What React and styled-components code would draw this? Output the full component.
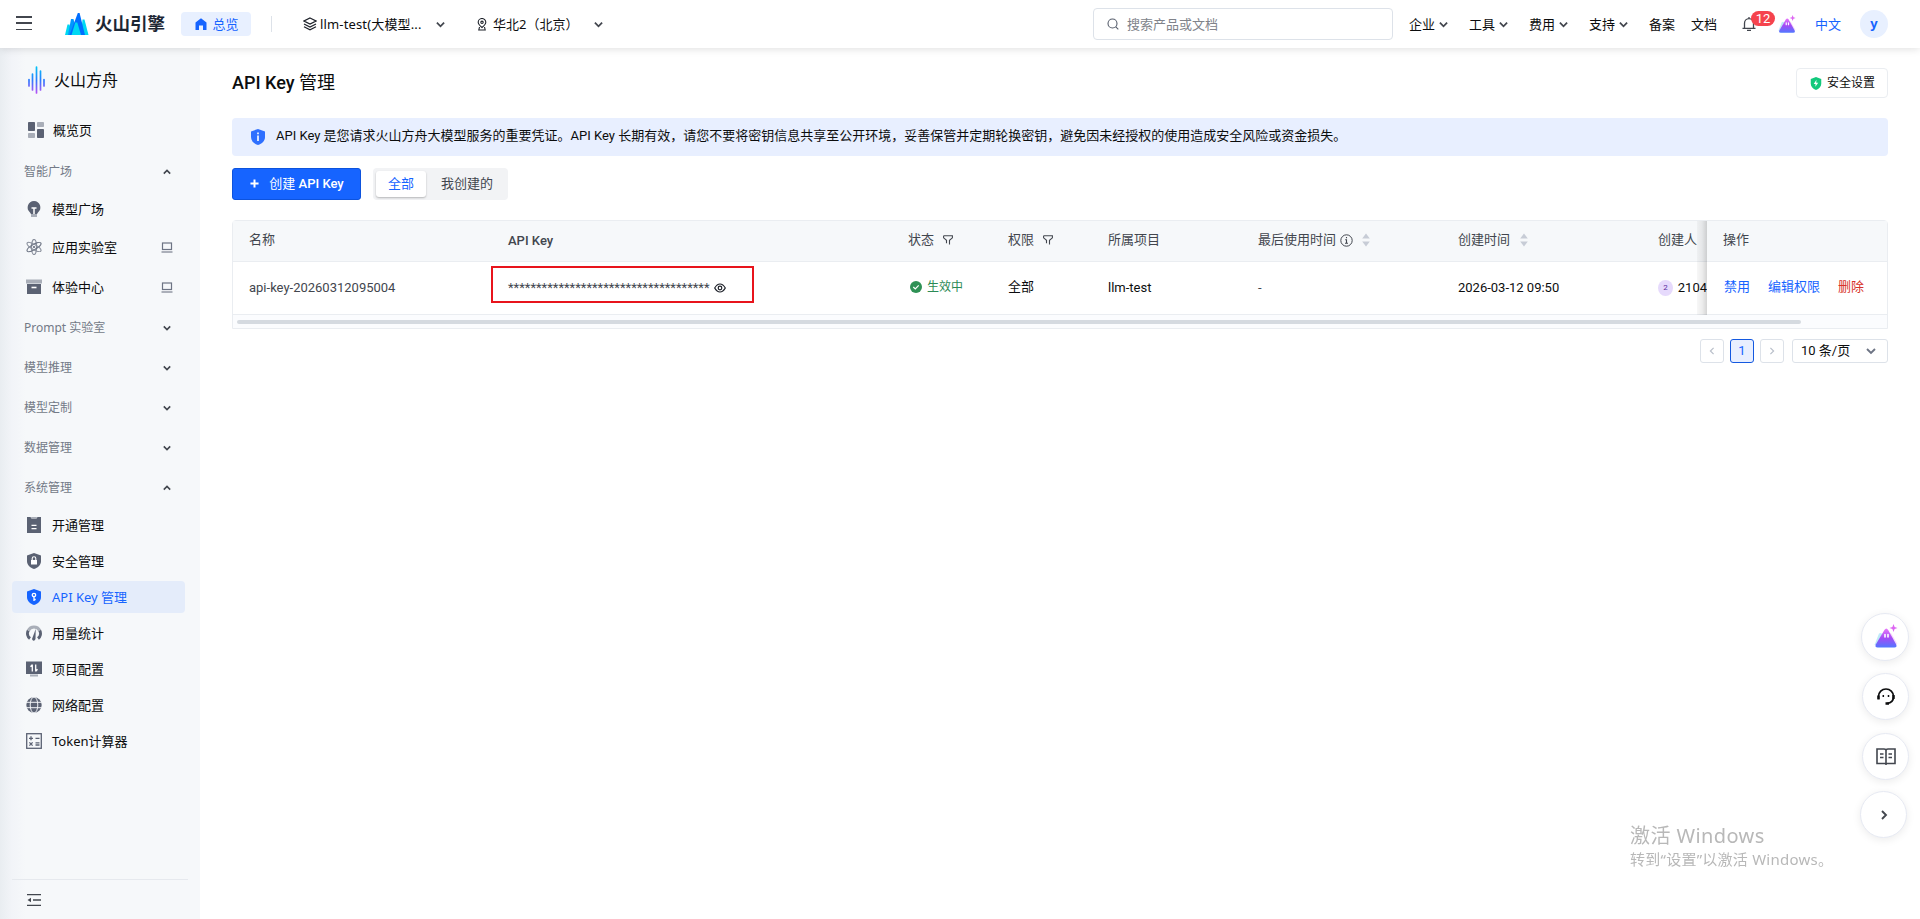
import styled, { createGlobalStyle } from 'styled-components'

const roboto = `Roboto, 'Noto Sans CJK SC', sans-serif`
const sans = `'Noto Sans', 'Noto Sans CJK SC', sans-serif`

const GlobalStyle = createGlobalStyle`
    * {
        box-sizing: border-box;
    }

    body {
        margin: 0;
        overflow: hidden;
        background: #fff;
        color: #0c0d0e;
        font-family: ${roboto};
        font-size: 13px;
        line-height: 20px;
    }
`

const Chevron = ({ size = 8, up, right, left, color = '#42464e', width = 1.6 }) => {
    const turn = up ? 180 : right ? -90 : left ? 90 : 0
    return (
        <svg width={size} height={size} viewBox="0 0 8 8" fill="none" stroke={color} strokeWidth={width}>
            <path d="M0.8 2.4 4 5.6 7.2 2.4" transform={`rotate(${turn} 4 4)`} />
        </svg>
    )
}

const Shield = ({ w = 16, h = 16, color = '#5b6273', children }) => (
    <svg width={w} height={h} viewBox="0 0 16 16" preserveAspectRatio="none">
        <path d="M8 0 15 2.4V8c0 4-3 6.8-7 8C4 14.8 1 12 1 8V2.4Z" fill={color} />
        {children}
    </svg>
)

const AiMountain = ({ size, id }) => (
    <svg width={size} height={size} viewBox="0 0 24 24">
        <defs>
            <linearGradient id={id} x1="0" y1="0" x2="0" y2="1">
                <stop offset="0" stopColor="#e879f9" />
                <stop offset="0.5" stopColor="#a44bf5" />
                <stop offset="1" stopColor="#5277ff" />
            </linearGradient>
        </defs>
        <path d="M5 9.5 0.5 21h7L9 10.5Q7 8 5 9.5Z" fill="#bfeaf8" />
        <path d="M15 9q2-1 3 1.5L23.5 20h-5Z" fill="#f6dcfb" />
        <path d="M10.400 6q1.900-3 3.800 0l8 14.500q1.200 3-1.800 3H3.600q-3 0-1.800-3Z" fill={`url(#${id})`} />
        <path d="M11 10.5v2.500M14 10.500v2.500" stroke="#fff" strokeWidth="1.6" strokeLinecap="round" />
        <path d="m19.500 0 1.100 2.900L23.500 4l-2.900 1.100L19.500 8l-1.100-2.900L15.500 4l2.900-1.100Z" fill="#dd66f2" />
    </svg>
)

const icons = {
    overview: (
        <>
            <rect width="7" height="9" rx="0.8" fill="#5b6273" />
            <rect x="9" y="7" width="7" height="9" rx="0.8" fill="#5b6273" />
            <rect x="9" width="7" height="5" rx="0.8" fill="#a9aeb8" />
            <rect y="11" width="7" height="5" rx="0.8" fill="#a9aeb8" />
        </>
    ),
    bulb: (
        <>
            <path d="M8 0a6.500 6.500 0 0 0-4 11.500l1 1.500h6l1-1.500A6.500 6.500 0 0 0 8 0" fill="#5b6273" />
            <path d="M5 13h6v3H5z" fill="#a9aeb8" />
            <path d="M5.500 7h5M8 7v6" stroke="#fff" strokeWidth="1.500" />
        </>
    ),
    atom: (
        <g fill="none" strokeWidth="1.200">
            <ellipse cx="8" cy="8" rx="2.500" ry="7.600" stroke="#8b919e" />
            <ellipse cx="8" cy="8" rx="2.500" ry="7.900" stroke="#6d7484" transform="rotate(60 8 8)" />
            <ellipse cx="8" cy="8" rx="2.500" ry="7.900" stroke="#8b919e" transform="rotate(-60 8 8)" />
            <circle cx="8" cy="8" r="1" fill="#5b6273" />
        </g>
    ),
    box: (
        <>
            <path d="M0 0.500h16v4H0z" fill="#a9aeb8" />
            <path d="M1 5h14v10H1z" fill="#5b6273" />
            <path d="M5.500 8.500h5" stroke="#fff" strokeWidth="1.600" />
        </>
    ),
    clipboard: (
        <>
            <path d="M1 0h3.500l1 1.500h5l1-1.500H15v16H1z" fill="#5b6273" />
            <path d="M5 0h6l-0.500 1.500h-5z" fill="#a9aeb8" />
            <path d="M5.500 8.300h5M5.500 11.700h5" stroke="#fff" strokeWidth="1.300" />
        </>
    ),
    gauge: (
        <>
            <path d="M4 13.500A6.300 6.300 0 0 1 2.300 5.500" fill="none" stroke="#5b6273" strokeWidth="3" />
            <path d="M2.300 5.500A6.300 6.300 0 0 1 13.700 5.500" fill="none" stroke="#a9aeb8" strokeWidth="3" />
            <path d="M13.700 5.500A6.300 6.300 0 0 1 12 13.500" fill="none" stroke="#5b6273" strokeWidth="3" />
            <path d="m9.700 4-0.200 10q-0.500 2-2.200 1.800Q5.700 15 6.200 13.500Z" fill="#5b6273" />
        </>
    ),
    monitor: (
        <>
            <path d="M0 0.500h16v12.500H0z" fill="#5b6273" />
            <path d="M4 13.500h8v2H4z" fill="#a9aeb8" />
            <path d="M6.300 3.500v7M4.500 5.700 6.300 3.700M9.700 3.500v7M11.500 8.300l-1.800 2" fill="none" stroke="#fff" strokeWidth="1.300" />
        </>
    ),
    globe: (
        <>
            <circle cx="8" cy="8" r="7.700" fill="#5b6273" />
            <g stroke="#f2f4f7" fill="none">
                <path d="M0 5.300h16M0 10.700h16" />
                <ellipse cx="8" cy="8" rx="3.800" ry="8" />
            </g>
        </>
    ),
    calc: (
        <g fill="none" stroke="#5b6273" strokeWidth="1.300">
            <rect x="0.700" y="0.700" width="14.600" height="14.600" />
            <path d="M3 5.300h4M5 3.300v4M9.500 5.300h4M9.500 9.800h4M9.500 12h4M3.400 9.400l3.200 3.200M6.600 9.400l-3.200 3.200" />
        </g>
    ),
}

const NavIcon = ({ name }) => {
    if (name === 'lock') {
        return (
            <Shield>
                <rect x="5" y="7" width="6" height="4.500" fill="#fff" />
                <path d="M6.200 7V5.600a1.800 1.800 0 0 1 3.600 0V7" fill="none" stroke="#fff" strokeWidth="1.100" />
            </Shield>
        )
    }
    if (name === 'key') {
        return (
            <Shield color="#1664ff">
                <circle cx="8" cy="6" r="1.700" fill="none" stroke="#fff" strokeWidth="1.300" />
                <path d="M8 7.500v4.500M8 10.500h1.700" stroke="#fff" strokeWidth="1.300" />
            </Shield>
        )
    }
    return (
        <svg width="16" height="16" viewBox="0 0 16 16">
            {icons[name]}
        </svg>
    )
}

const Filter = () => (
    <svg width="10" height="10" viewBox="0 0 10 10" fill="none" stroke="#42464e" strokeWidth="1.100">
        <path d="M0.600 0.800h8.800v2L6.500 5.300v4.200M3.500 8.300v-3L0.600 2.800v-2" />
    </svg>
)

const Sorter = () => (
    <svg width="8" height="14" viewBox="0 0 8 14" fill="#c7ccd6">
        <path d="M4 0.500 7.800 5.500H0.200ZM4 13.500 7.800 8.500H0.200Z" />
    </svg>
)

const Laptop = () => (
    <svg width="12" height="11" viewBox="0 0 12 11" fill="none" stroke="#6d7484">
        <rect x="1.500" y="1" width="9" height="6.500" strokeWidth="1.200" />
        <path d="M0.500 10h11" strokeWidth="1.100" />
    </svg>
)

const menus = ['企业', '工具', '费用', '支持']

const plaza = [
    { text: '模型广场', icon: 'bulb', height: 36 },
    { text: '应用实验室', icon: 'atom', height: 40, laptop: true },
    { text: '体验中心', icon: 'box', height: 40, laptop: true },
]

const system = [
    { text: '开通管理', icon: 'clipboard' },
    { text: '安全管理', icon: 'lock' },
    { text: 'API Key 管理', icon: 'key', active: true },
    { text: '用量统计', icon: 'gauge' },
    { text: '项目配置', icon: 'monitor' },
    { text: '网络配置', icon: 'globe' },
    { text: 'Token计算器', icon: 'calc' },
]

function TopBar() {
    return (
        <Header>
            <Burger>
                <i />
                <i />
                <i />
            </Burger>
            <Logo>
                <svg width="24" height="22" viewBox="0 0 24 22">
                    <path d="M0 22 2.500 11.500h2L7 22Z" fill="#00d8f2" />
                    <path d="M16 22 17.500 6.500h2L23.500 22Z" fill="#00d8f2" />
                    <path d="M3 22 6 6h2.500L12 22Z" fill="#0098ff" />
                    <path d="M4.500 22 12.800 0h1.800L20 22Z" fill="#006eff" />
                    <path d="M6.500 22 10.300 9.500h2L16 22Z" fill="#00d8f2" />
                </svg>
                <span>火山引擎</span>
            </Logo>
            <HomeButton>
                <svg width="12" height="12" viewBox="0 0 12 12">
                    <path d="M6 0.300 11.500 4.500V12H8V7.500H4V12H0.500V4.500Z" fill="#1664ff" />
                </svg>
                总览
            </HomeButton>
            <Divider />
            <Picker $width={174}>
                <svg width="14" height="14" viewBox="0 0 14 14" fill="none" stroke="#1d2129" strokeWidth="1.200">
                    <path d="M7 1 13 4 7 7 1 4ZM1 7l6 3 6-3M1 9.800l6 3 6-3" />
                </svg>
                <PickerText>llm-test(大模型...</PickerText>
                <Chevron size={9} />
            </Picker>
            <Picker $width={127}>
                <svg width="10" height="13" viewBox="0 0 10 13" fill="none" stroke="#1d2129" strokeWidth="1.100">
                    <path d="M5 9.500C2.500 7.500 1.200 6 1.200 4.300a3.800 3.800 0 0 1 7.600 0C8.800 6 7.500 7.500 5 9.500ZM2.500 9 1.800 12h6.400L7.500 9" />
                    <circle cx="5" cy="4.300" r="1.200" />
                </svg>
                <PickerText $gap={6}>华北2（北京）</PickerText>
                <Chevron size={9} />
            </Picker>
            <Search>
                <svg width="12" height="12" viewBox="0 0 12 12" fill="none" stroke="#565d6b" strokeWidth="1.100">
                    <circle cx="5.500" cy="5.500" r="4.500" />
                    <path d="m8.800 8.800 2.500 2.500" />
                </svg>
                搜索产品或文档
            </Search>
            <Menus>
                {menus.map((text) => (
                    <MenuItem key={text} $width={60}>
                        {text}
                        <Chevron size={9} />
                    </MenuItem>
                ))}
                <MenuItem $width={42}>备案</MenuItem>
                <MenuItem $width={51}>文档</MenuItem>
            </Menus>
            <Bell>
                <svg width="14" height="14" viewBox="0 0 14 14" fill="none" stroke="#42464e" strokeWidth="1.300">
                    <path d="M0.500 11.300h13M2.500 11V6.200a4.500 4.500 0 0 1 9 0V11M7 0v1.700M5 13.300h4" />
                </svg>
                <Badge>12</Badge>
            </Bell>
            <AiMountain size={18} id="mountainTop" />
            <Language>中文</Language>
            <Avatar>y</Avatar>
        </Header>
    )
}

function SideBar() {
    return (
        <Side>
            <Product>
                <svg width="17" height="28" viewBox="0 0 17 28" strokeWidth="1.700" strokeLinecap="round">
                    <defs>
                        <linearGradient id="ark" gradientUnits="userSpaceOnUse" x1="0" y1="0" x2="0" y2="28">
                            <stop offset="0" stopColor="#00c8f5" />
                            <stop offset="0.500" stopColor="#2b7cff" />
                            <stop offset="1" stopColor="#c050f5" />
                        </linearGradient>
                    </defs>
                    <g stroke="url(#ark)">
                        <path d="M1 13.500 1.010 20M4.500 8 4.510 24M8.500 1 8.510 27M12.500 5 12.510 24M16 13.500 16.010 20" />
                    </g>
                </svg>
                火山方舟
            </Product>
            <NavItem $height={36} $wide>
                <NavIcon name="overview" />
                概览页
            </NavItem>
            <Group $height={43} $top={4}>
                智能广场
                <Chevron up />
            </Group>
            <PlazaList>
                {plaza.map((item) => (
                    <NavItem key={item.text} $height={item.height}>
                        <NavIcon name={item.icon} />
                        {item.text}
                        {item.laptop && (
                            <NavTail>
                                <Laptop />
                            </NavTail>
                        )}
                    </NavItem>
                ))}
            </PlazaList>
            {['Prompt 实验室', '模型推理', '模型定制', '数据管理'].map((text) => (
                <Group key={text}>
                    {text}
                    <Chevron />
                </Group>
            ))}
            <Group>
                系统管理
                <Chevron up />
            </Group>
            <SystemList>
                {system.map((item) => (
                    <NavItem key={item.text} $height={32} $active={item.active}>
                        <NavIcon name={item.icon} />
                        {item.text}
                    </NavItem>
                ))}
            </SystemList>
            <Collapse>
                <svg width="14" height="12" viewBox="0 0 14 12" stroke="#42464e" strokeWidth="1.300">
                    <path d="M0 0.700h14M6 6h8M0 11.300h14" />
                    <path d="M0.500 6 4 3.800v4.400Z" fill="#42464e" stroke="none" />
                </svg>
            </Collapse>
        </Side>
    )
}

function KeyTable() {
    return (
        <Table>
            <Row $head>
                <Cell $width={259} $lift>
                    名称
                </Cell>
                <Cell $width={400}>
                    <b>API Key</b>
                </Cell>
                <Cell $width={100} $gap={9} $lift>
                    状态 <Filter />
                </Cell>
                <Cell $width={100} $gap={9} $lift>
                    权限 <Filter />
                </Cell>
                <Cell $width={150} $lift>
                    所属项目
                </Cell>
                <Cell $width={200} $lift>
                    最后使用时间
                    <Info width="13" height="13" viewBox="0 0 13 13" fill="none" stroke="#42464e">
                        <circle cx="6.500" cy="6.500" r="5.700" />
                        <path d="M6.500 3v1.300M5.200 5.800h1.300V9M5 9.300h3" strokeWidth="1.100" />
                    </Info>
                    <Sorter />
                </Cell>
                <Cell $width={200} $gap={10} $lift>
                    创建时间 <Sorter />
                </Cell>
                <Cell $width={65} $lift>
                    创建人
                </Cell>
                <Fixed $head>操作</Fixed>
            </Row>
            <Row>
                <Cell $width={259} $muted>
                    api-key-20260312095004
                </Cell>
                <Cell $width={400} $muted>
                    <Stars>************************************</Stars>
                    <svg width="12" height="10" viewBox="0 0 12 10" fill="none" stroke="#1d2129" strokeWidth="1.200">
                        <path d="M0.700 5Q3 1 6 1t5.300 4Q9 9 6 9T0.700 5Z" />
                        <circle cx="6" cy="5" r="1.800" />
                    </svg>
                    <Highlight />
                </Cell>
                <Cell $width={100} $lift>
                    <Status>
                        <svg width="12" height="12" viewBox="0 0 12 12">
                            <circle cx="6" cy="6" r="6" fill="#2e9155" />
                            <path d="m3.300 6 2 2 3.400-3.600" fill="none" stroke="#fff" strokeWidth="1.200" />
                        </svg>
                        生效中
                    </Status>
                </Cell>
                <Cell $width={100} $lift>
                    全部
                </Cell>
                <Cell $width={150}>llm-test</Cell>
                <Cell $width={200} $muted>
                    -
                </Cell>
                <Cell $width={200}>2026-03-12 09:50</Cell>
                <Cell $width={65} $gap={5}>
                    <Creator>2</Creator>
                    2104
                </Cell>
                <Fixed>
                    <Action>禁用</Action>
                    <Action>编辑权限</Action>
                    <Action $danger>删除</Action>
                </Fixed>
            </Row>
            <ScrollTrack>
                <ScrollThumb />
            </ScrollTrack>
        </Table>
    )
}

function App() {
    return (
        <Page>
            <GlobalStyle />
            <TopBar />
            <Body>
                <SideBar />
                <Main>
                    <TitleRow>
                        <Title>
                            API Key <Regular>管理</Regular>
                        </Title>
                        <Security>
                            <Shield w={12} h={13} color="#12c97c">
                                <path d="M8.600 3.500 5 8.700h2.500L7 12l4-5H8.300Z" fill="#fff" />
                            </Shield>
                            安全设置
                        </Security>
                    </TitleRow>
                    <Notice>
                        <Shield color="#2f70ff">
                            <path d="M8 3.500v1.800M8 6.500v5.500" stroke="#fff" strokeWidth="1.600" />
                        </Shield>
                        <NoticeText>
                            API Key 是您请求火山方舟大模型服务的重要凭证。API Key
                            长期有效，请您不要将密钥信息共享至公开环境，妥善保管并定期轮换密钥，避免因未经授权的使用造成安全风险或资金损失。
                        </NoticeText>
                    </Notice>
                    <Toolbar>
                        <CreateButton>
                            <svg width="9" height="9" viewBox="0 0 10 10" stroke="#fff" strokeWidth="2.200">
                                <path d="M5 0.500v9M0.500 5h9" />
                            </svg>
                            <span>
                                <Regular>创建</Regular> API Key
                            </span>
                        </CreateButton>
                        <Segment>
                            <SegmentItem $active>全部</SegmentItem>
                            <SegmentItem>我创建的</SegmentItem>
                        </Segment>
                    </Toolbar>
                    <KeyTable />
                    <Pagination>
                        <PageButton>
                            <Chevron left color="#b9bfca" width={1.2} />
                        </PageButton>
                        <PageButton $active>1</PageButton>
                        <PageButton>
                            <Chevron right color="#b9bfca" width={1.2} />
                        </PageButton>
                        <PageSize>
                            10 条/页
                            <Chevron size={10} color="#6d7484" width={1.5} />
                        </PageSize>
                    </Pagination>
                </Main>
            </Body>
            <FloatBar>
                <FloatButton $size={48} $gap={12} $lift={3}>
                    <AiMountain size={24} id="mountainFloat" />
                </FloatButton>
                <FloatButton $gap={13}>
                    <svg width="18" height="17" viewBox="0 0 18 17" fill="none" stroke="#0c0d0e" strokeWidth="1.700">
                        <path d="M1.500 11V8.500a7.500 7.500 0 0 1 15 0c0 4-2.500 6.500-6.500 7" />
                        <path d="M1.500 7.500v4M16.500 7v4M8.500 15.500h3.500" strokeWidth="2.400" />
                        <path d="M6.300 7v2M11.500 7v2" strokeWidth="1.500" />
                    </svg>
                </FloatButton>
                <FloatButton $gap={11}>
                    <svg width="20" height="17" viewBox="0 0 20 17" fill="none" stroke="#42464e" strokeWidth="1.600">
                        <path d="M10 15.500H1V1h7q2 0 2 1.500 0-1.500 2-1.500h7v14.500ZM10 2v15M4 6h3.500M4 9.500h3.500M12.500 6H16M12.500 9.500H16" />
                    </svg>
                </FloatButton>
                <FloatButton $shift={2}>
                    <Chevron right size={10} color="#42464e" width={1.5} />
                </FloatButton>
            </FloatBar>
            <Watermark>
                <strong>激活 Windows</strong>
                <span>转到“设置”以激活 Windows。</span>
            </Watermark>
        </Page>
    )
}

const Page = styled.div`
    height: 919px;
    display: flex;
    flex-direction: column;
`

const Header = styled.header`
    height: 48px;
    flex: none;
    display: flex;
    align-items: center;
    padding: 0 32px 0 16px;
    background: #fff;
    box-shadow: 0 1px 8px rgba(0, 0, 0, 0.13);
    z-index: 2;
    font-family: ${sans};

    svg {
        flex: none;
    }
`

const Burger = styled.div`
    width: 16px;
    height: 14px;
    display: flex;
    flex-direction: column;
    justify-content: space-between;
    margin: -2px 33px 0 0;

    i {
        height: 1.5px;
        background: #42464e;
    }
`

const Logo = styled.div`
    width: 116px;
    display: flex;
    align-items: center;
    gap: 6px;
    font-family: 'Noto Sans CJK SC', sans-serif;
    font-size: 17.5px;
    font-weight: 700;
    color: #1d2735;
    white-space: nowrap;

    span {
        margin-top: -2px;
    }
`

const HomeButton = styled.div`
    width: 70px;
    height: 24px;
    padding-left: 2px;
    display: flex;
    align-items: center;
    justify-content: center;
    gap: 5px;
    border-radius: 4px;
    background: #e8f0ff;
    color: #1664ff;
`

const Divider = styled.div`
    width: 1px;
    height: 16px;
    margin: 0 31px 0 20px;
    background: #dde2e9;
`

const Picker = styled.div`
    width: ${(p) => p.$width}px;
    display: flex;
    align-items: center;
    white-space: nowrap;
`

const PickerText = styled.span`
    width: ${(p) => (p.$gap ? 101 : 116)}px;
    margin-left: ${(p) => p.$gap || 3}px;
    letter-spacing: ${(p) => (p.$gap ? 0 : 0.15)}px;
`

const Search = styled.div`
    width: 300px;
    height: 32px;
    margin: 0 16px 0 auto;
    padding: 0 13px;
    display: flex;
    align-items: center;
    gap: 8px;
    border: 1px solid #dde2e9;
    border-radius: 4px;
    color: #80838a;
`

const Menus = styled.nav`
    display: flex;
`

const MenuItem = styled.div`
    width: ${(p) => p.$width}px;
    display: flex;
    align-items: center;
    gap: 4px;
`

const Bell = styled.div`
    position: relative;
    width: 36px;
    display: flex;
`

const Badge = styled.span`
    position: absolute;
    left: 9px;
    top: -6px;
    width: 24px;
    height: 15px;
    border-radius: 8px;
    background: #f5434d;
    color: #fff;
    font: 400 13px/15px ${roboto};
    text-align: center;
`

const Language = styled.span`
    margin: 0 19px;
    color: #1664ff;
`

const Avatar = styled.div`
    width: 28px;
    height: 28px;
    border-radius: 50%;
    background: #e8f0ff;
    color: #1664ff;
    font-weight: 700;
    line-height: 27px;
    text-align: center;
`

const Body = styled.div`
    flex: 1;
    display: flex;
`

const Side = styled.aside`
    width: 200px;
    padding: 16px 15px 0 12px;
    display: flex;
    flex-direction: column;
    background: linear-gradient(90deg, #e9edf1 0, #f2f4f8 12px, #f6f8fa 26px);
    font-family: ${sans};
`

const Product = styled.div`
    height: 32px;
    padding-left: 16px;
    margin-bottom: 16px;
    display: flex;
    align-items: center;
    gap: 9px;
    font-size: 16px;
`

const NavItem = styled.div`
    height: ${(p) => p.$height}px;
    padding: 0 12px 0 ${(p) => (p.$wide ? 16 : 14)}px;
    display: flex;
    align-items: center;
    gap: ${(p) => (p.$wide ? 9 : 10)}px;
    border-radius: 4px;
    background: ${(p) => (p.$active ? '#e4ecfa' : 'transparent')};
    color: ${(p) => (p.$active ? '#1664ff' : '#0c0d0e')};
`

const NavTail = styled.span`
    margin-left: auto;
    display: flex;
`

const PlazaList = styled.div`
    padding-bottom: 1px;
`

const Group = styled.div`
    height: ${(p) => p.$height || 40}px;
    padding: ${(p) => p.$top || 0}px 14px 0 12px;
    display: flex;
    align-items: center;
    justify-content: space-between;
    font-size: 12px;
    color: #737a87;
`

const SystemList = styled.div`
    display: flex;
    flex-direction: column;
    gap: 4px;
    padding-top: 1px;
`

const Collapse = styled.div`
    height: 40px;
    width: 176px;
    margin-top: auto;
    padding: 11px 0 0 15px;
    border-top: 1px solid #e6e9ee;
`

const Main = styled.main`
    flex: 1;
    padding: 20px 32px 0;
`

const TitleRow = styled.div`
    height: 30px;
    margin-bottom: 20px;
    display: flex;
    align-items: center;
    justify-content: space-between;
`

const Title = styled.h1`
    margin: 0;
    font-size: 18px;
    font-weight: 500;
`

const Regular = styled.span`
    font-weight: 400;
`

const Security = styled.div`
    width: 92px;
    height: 30px;
    padding-left: 1px;
    display: flex;
    align-items: center;
    justify-content: center;
    gap: 5px;
    border: 1px solid #eaedf1;
    border-radius: 4px;
    font-size: 12px;
`

const Notice = styled.div`
    height: 38px;
    padding: 0 18px;
    display: flex;
    align-items: center;
    gap: 10px;
    border-radius: 4px;
    background: #e8efff;
    white-space: nowrap;
`

const NoticeText = styled.p`
    margin: 0 0 2px;
`

const Toolbar = styled.div`
    display: flex;
    gap: 12px;
    margin: 12px 0 20px;
`

const CreateButton = styled.div`
    width: 129px;
    height: 32px;
    display: flex;
    align-items: center;
    justify-content: center;
    gap: 10px;
    padding: 0 0 1px 1px;
    border: 1px solid #0d53dd;
    border-radius: 3px;
    background: #1664ff;
    color: #fff;
    font-weight: 500;
`

const Segment = styled.div`
    height: 32px;
    width: 135px;
    padding: 3px;
    display: flex;
    border-radius: 4px;
    background: #f2f3f5;
`

const SegmentItem = styled.div`
    height: 26px;
    flex: none;
    padding: ${(p) => (p.$active ? '0 12px' : '0 15px')};
    border-radius: 3px;
    line-height: 25px;
    white-space: nowrap;
    color: ${(p) => (p.$active ? '#1664ff' : '#42464e')};
    background: ${(p) => (p.$active ? '#fff' : 'transparent')};
    box-shadow: ${(p) => (p.$active ? '0 1px 2px rgba(0, 0, 0, 0.25)' : 'none')};
`

const Table = styled.div`
    border: 1px solid #eaedf1;
    border-radius: 4px 4px 0 0;
`

const Row = styled.div`
    height: ${(p) => (p.$head ? 41 : 53)}px;
    display: flex;
    border-bottom: 1px solid #eaedf1;
    background: ${(p) => (p.$head ? '#f6f8fa' : '#fff')};
    color: ${(p) => (p.$head ? '#42464e' : '#0c0d0e')};

    b {
        font-weight: 500;
    }
`

const Cell = styled.div`
    position: relative;
    width: ${(p) => p.$width}px;
    flex: none;
    padding: 0 0 ${(p) => (p.$lift ? 2 : 0)}px 16px;
    display: flex;
    align-items: center;
    gap: ${(p) => p.$gap || 0}px;
    white-space: nowrap;
    color: ${(p) => (p.$muted ? '#42464e' : 'inherit')};
`

const Fixed = styled.div`
    position: relative;
    flex: 1;
    padding: 0 0 2px ${(p) => (p.$head ? 16 : 17)}px;
    display: flex;
    align-items: center;
    gap: 18px;
    background: ${(p) => (p.$head ? '#f6f8fa' : '#fff')};

    &::before {
        content: '';
        position: absolute;
        top: 0;
        bottom: -1px;
        left: -10px;
        width: 10px;
        background: linear-gradient(90deg, rgba(0, 0, 0, 0.03), rgba(0, 0, 0, 0.07) 50%, rgba(0, 0, 0, 0.17));
    }
`

const Info = styled.svg`
    margin: 0 9px 0 4px;
`

const Stars = styled.span`
    width: 202px;
    margin-right: 4px;
`

const Highlight = styled.div`
    position: absolute;
    left: -1px;
    top: 4px;
    width: 263px;
    height: 37px;
    border: 2px solid #e8141c;
`

const Status = styled.span`
    display: flex;
    align-items: center;
    gap: 5px;
    padding-left: 2px;
    font-size: 12px;
    color: #2b8a55;
`

const Creator = styled.span`
    width: 16px;
    height: 16px;
    border-radius: 50%;
    background: #e6dafc;
    color: #5b2c9c;
    font-size: 8px;
    line-height: 16px;
    text-align: center;
`

const Action = styled.a`
    color: ${(p) => (p.$danger ? '#d7312a' : '#1664ff')};
`

const ScrollTrack = styled.div`
    height: 13px;
    padding: 5px 4px;
    background: #fbfcfe;
`

const ScrollThumb = styled.div`
    width: 1564px;
    height: 4px;
    border-radius: 2px;
    background: #d5dae0;
`

const Pagination = styled.div`
    display: flex;
    justify-content: flex-end;
    gap: 6px;
    margin-top: 10px;
`

const PageButton = styled.div`
    width: 24px;
    height: 24px;
    display: flex;
    align-items: center;
    justify-content: center;
    border: 1px solid ${(p) => (p.$active ? '#1459e0' : '#dde2e9')};
    border-radius: 3px;
    background: ${(p) => (p.$active ? '#e8efff' : '#fff')};
    color: #1664ff;
`

const PageSize = styled.div`
    width: 96px;
    height: 24px;
    margin-left: 2px;
    padding: 0 11px 1px 8px;
    display: flex;
    align-items: center;
    justify-content: space-between;
    border: 1px solid #dde2e9;
    border-radius: 3px;
`

const FloatBar = styled.div`
    position: fixed;
    right: 11px;
    top: 613px;
    z-index: 3;
    display: flex;
    flex-direction: column;
    align-items: flex-end;
`

const FloatButton = styled.div`
    width: ${(p) => p.$size || 47}px;
    height: ${(p) => p.$size || 47}px;
    margin: 0 ${(p) => p.$shift || 0}px ${(p) => p.$gap || 0}px 0;
    padding: 0 0 ${(p) => p.$lift || 0}px 1px;
    display: flex;
    align-items: center;
    justify-content: center;
    border: 1px solid #e6e9f2;
    border-radius: 50%;
    background: #fff;
    box-shadow: 0 2px 8px rgba(0, 0, 0, 0.08);
`

const Watermark = styled.div`
    position: fixed;
    left: 1630px;
    top: 823px;
    display: flex;
    flex-direction: column;
    font-family: ${sans};
    color: #b8b8b8;

    strong {
        font-size: 20px;
        font-weight: 400;
        line-height: 26px;
        letter-spacing: 0.4px;
    }

    span {
        font-size: 15px;
        line-height: 21px;
        letter-spacing: 0.25px;
        white-space: nowrap;
    }
`

export default App
